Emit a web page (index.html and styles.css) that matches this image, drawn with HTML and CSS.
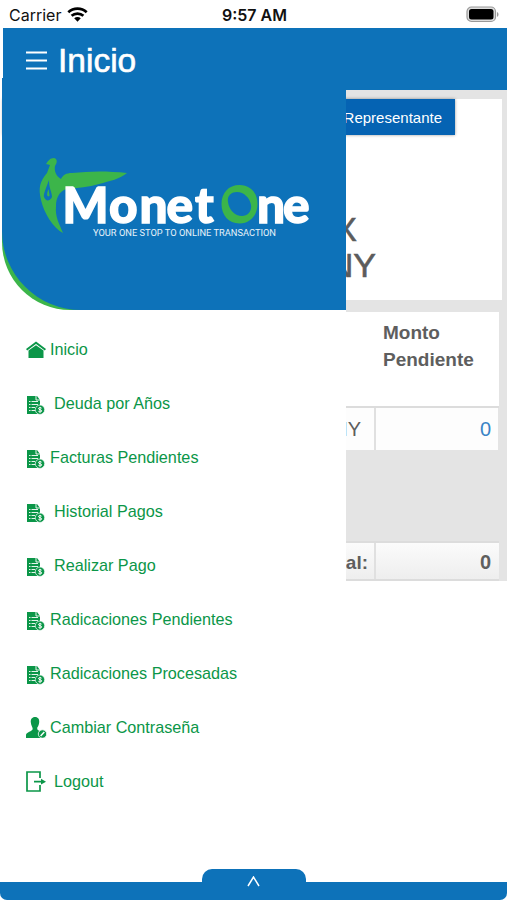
FILE: index.html
```html
<!DOCTYPE html>
<html lang="es">
<head>
  <meta charset="UTF-8">
  <title>Monet One</title>
  <link rel="stylesheet" href="styles.css">
</head>
<body>
  <svg class="sprite">
    <symbol id="icon-bill" viewBox="0 0 19 20">
      <path fill="#0b9648" d="M1 1h10l3 4v7h-1v7H1z"/>
      <path stroke="#fff" stroke-width=".9" fill="none" d="M10 1v4h4M3 6.500h1.500M5.500 6.500H12M3 9.500h1.500M5.500 9.500H12M3 12.500h1.500M5.500 12.500H9M3 15.500h1.500M5.500 15.500H9"/>
      <circle cx="14" cy="14.700" r="4.700" fill="#0b9648" stroke="#fff" stroke-width=".7"/>
      <path stroke="#fff" stroke-width="1" fill="none" d="M15.600 13.200c-1-1-3.100-.7-3.100.3 0 1.500 3.200 1 3.200 2.400 0 1.200-2.300 1.300-3.300.4M14 11.900v5.800"/>
    </symbol>
  </svg>

  <div class="screen">
    <div class="status-bar">
      <div class="carrier">
        <span>Carrier</span>
        <svg width="21" height="15" viewBox="0 0 21 15">
          <g fill="none" stroke="#000" stroke-width="2.700">
            <path d="M1.300 5.300C6.500.5 14.500.5 19.700 5.300"/>
            <path d="M4.600 8.800c3.300-3 8.500-3 11.800 0"/>
          </g>
          <path d="M7.200 11.300c1.900-1.700 4.700-1.700 6.600 0L10.500 14.700z"/>
        </svg>
      </div>
      <div class="clock">9:57 AM</div>
      <svg class="battery" width="34" height="17" viewBox="0 0 34 17">
        <rect x="1" y="1" width="28.500" height="14.500" rx="4.500" fill="#ddd" stroke="#999" stroke-width="1.200"/>
        <rect x="3" y="3" width="24.500" height="10.500" rx="2.500"/>
        <path fill="#999" d="M31 6c2 .8 2 4 0 4.800z"/>
      </svg>
    </div>

    <header class="app-header">
      <svg width="21" height="20" viewBox="0 0 21 20">
        <path stroke="#fff" stroke-width="2" d="M0 1.500h21M0 9.500h21M0 17.500h21"/>
      </svg>
      <h1>Inicio</h1>
    </header>

    <main class="content">
      <section class="card">
        <div class="rep-button">Representante</div>
        <h2 class="company">X<br>NY</h2>
      </section>
      <section class="table">
        <div class="table-head">Monto<br>Pendiente</div>
        <div class="row">
          <div class="cell name">NY</div>
          <div class="cell amount link">0</div>
        </div>
        <div class="row total">
          <div class="cell name">Total:</div>
          <div class="cell amount">0</div>
        </div>
      </section>
    </main>

    <aside class="drawer">
      <div class="drawer-top">
        <div class="drawer-brand">
          <svg width="276" height="86" viewBox="36 155 276 86">
            <!-- bird -->
            <path fill="#3cb54a" d="M46 164c2-3 4-6 8-6 4 1 3 5 1 8-1 5 1 10 6 13 2-4 5-6 11-6 18-2 36-2 55 0-7 6-17 8-28 11-10 3-21 4-33 5-7 3-10 9-10 17-1 11 3 17 7 27-10-5-19-20-22-33-3-12-1-19 6-27l3-8z"/>
            <path fill="#0d72b9" d="M49 180c-2 6-6 14-5 17 2 5 6 4 8 0 0-5-3-8-3-17z"/>
            <path fill="#3cb54a" d="M48.500 189c-1 3-2 5-1 7 1 1 2 0 2-1z"/>
            <g class="logo-word">
              <text x="62.500" y="222.500" textLength="46" lengthAdjust="spacingAndGlyphs">M</text>
              <text x="109 139.500 166.500 195" y="222.500">onet</text>
              <text x="257 283" y="222.500">ne</text>
            </g>
            <path fill="#3cb54a" fill-rule="evenodd" d="M239.500 185c11 0 18 8 18 19s-7 19.500-18 19.500-18-8.500-18-19.500 7-19 18-19zM237 192c-6 0-10 4-9 10 1 8 7 14 14 14 6 0 10-5 9-11-1-7-7-13-14-13z"/>
            <text class="logo-tag" x="93" y="235.500" textLength="183" lengthAdjust="spacingAndGlyphs">YOUR ONE STOP TO ONLINE TRANSACTION</text>
          </svg>
        </div>
      </div>

      <ul class="menu">
        <li>
          <svg width="20" height="17" viewBox="0 0 20 17">
            <path fill="none" stroke="#0b9648" stroke-width="2" d="M.6 8.700L10 1.700l9.400 7"/>
            <path fill="#0b9648" d="M2.500 9.500L10 4.200l7.500 5.300V17h-15z"/>
          </svg>
          <span>Inicio</span>
        </li>
        <li class="spaced"><svg class="bill"><use href="#icon-bill"/></svg><span>Deuda por Años</span></li>
        <li><svg class="bill"><use href="#icon-bill"/></svg><span>Facturas Pendientes</span></li>
        <li class="spaced"><svg class="bill"><use href="#icon-bill"/></svg><span>Historial Pagos</span></li>
        <li class="spaced"><svg class="bill"><use href="#icon-bill"/></svg><span>Realizar Pago</span></li>
        <li><svg class="bill"><use href="#icon-bill"/></svg><span>Radicaciones Pendientes</span></li>
        <li><svg class="bill"><use href="#icon-bill"/></svg><span>Radicaciones Procesadas</span></li>
        <li>
          <svg class="user" width="21" height="21" viewBox="0 0 21 21">
            <path fill="#0b9648" d="M9 0c3.200 0 4.500 2.300 4.200 5.200C13 8 12 9.500 11.300 10.500c-.4 2.500 1 3 4.700 4.500V21H0v-3c0-3 6.500-3.500 6.700-6C6.800 10.500 5 8.500 4.800 5.200 4.500 2.300 6 0 9 0z"/>
            <circle cx="16.500" cy="17" r="4.200" fill="#0b9648" stroke="#fff" stroke-width=".8"/>
            <path stroke="#fff" stroke-width="1.500" d="M14.600 19l3.700-3.900"/>
          </svg>
          <span>Cambiar Contraseña</span>
        </li>
        <li class="spaced">
          <svg width="20" height="21" viewBox="0 0 20 21">
            <path fill="none" stroke="#0b9648" stroke-width="1.700" d="M14 7V1H1v19h13v-6M8 10.700h8"/>
            <path fill="#0b9648" d="M15 7.800l5 2.900-5 2.900z"/>
          </svg>
          <span>Logout</span>
        </li>
      </ul>
    </aside>

    <footer class="bottom-bar">
      <div class="bottom-tab">
        <svg width="13" height="11" viewBox="0 0 13 11">
          <path fill="none" stroke="#fff" stroke-width="1.500" d="M1 10l5.500-9L12 10"/>
        </svg>
      </div>
      <div class="bottom-strip"></div>
    </footer>
  </div>
</body>
</html>
```

FILE: styles.css
```css
* {
  box-sizing: border-box;
}
body {
  margin: 0;
  background: #fff;
  font-family: "Liberation Sans", Arial, sans-serif;
}
h1, h2, ul {
  margin: 0;
  padding: 0;
}
.sprite {
  display: none;
}
.screen {
  position: relative;
  display: flex;
  flex-direction: column;
  width: 507px;
  height: 900px;
  overflow: hidden;
}

/* status bar */
.status-bar {
  display: grid;
  grid-template-columns: 1fr auto 1fr;
  align-items: center;
  height: 28px;
  padding: 1px 7px 0 9px;
  font-family: Inter, "Liberation Sans", sans-serif;
  font-size: 16px;
  color: #111;
}
.carrier {
  display: flex;
  align-items: center;
  gap: 6px;
}
.clock {
  font-weight: 600;
}
.battery {
  justify-self: end;
}

.app-header {
  display: flex;
  align-items: center;
  gap: 11px;
  height: 62px;
  margin-left: 3px;
  padding: 3px 0 0 23px;
  background: #0d72b9;
  color: #fff;
}
.app-header h1 {
  font-size: 33.5px;
  font-weight: 400;
  -webkit-text-stroke: 0.6px #fff;
}

/* page behind the drawer */
.content {
  height: 491px;
  margin-left: 3px;
  padding: 9px 5px 0 0;
  background: #e4e4e4;
}
.card {
  display: flex;
  flex-direction: column;
  height: 201px;
  background: #fff;
}
.rep-button {
  width: 452px;
  height: 36px;
  padding-right: 13px;
  background: #0563b3;
  box-shadow: 0 0 3px rgba(0, 0, 0, 0.4);
  color: #fff;
  font-size: 15px;
  line-height: 38px;
  text-align: right;
}
.company {
  width: 373px;
  padding-top: 76px;
  font-size: 34px;
  font-weight: 400;
  line-height: 36px;
  color: #5c5c5c;
  -webkit-text-stroke: 0.6px #5c5c5c;
  text-align: right;
}
.company::first-line {
  letter-spacing: 19px;
}
.table {
  margin: 12px 3px 0 0;
  color: #5e5e5e;
}
.table-head {
  height: 94px;
  padding: 7px 0 0 380px;
  background: #fff;
  font-size: 19px;
  font-weight: bold;
  line-height: 27px;
}
.row {
  display: flex;
  height: 44px;
  border-top: 2px solid #dcdcdc;
}
.cell {
  flex: none;
  background: #fdfdfd;
  font-size: 20px;
  line-height: 42px;
  text-align: right;
}
.cell.name {
  width: 373px;
  padding-right: 13px;
  border-right: 2px solid #e0e0e0;
}
.cell.amount {
  width: 122px;
  padding-right: 7px;
}
.cell.link {
  color: #3a84c6;
}
.row.total {
  height: 40px;
  margin-top: 91px;
  border-bottom: 2px solid #dcdcdc;
}
.total .cell {
  background: linear-gradient(#fbfbfb, #eee);
  font-weight: bold;
  line-height: 39px;
}
.total .cell.name {
  padding-right: 6px;
  font-size: 19px;
}
.total .cell.amount {
  width: 123px;
  padding-right: 8px;
}

/* side menu, slides over the page */
.drawer {
  position: absolute;
  top: 78px;
  left: 2px;
  width: 344px;
  height: 804px;
  background: #fff;
}
.drawer-top {
  height: 232px;
  background: #3cb54a;
  border-bottom-left-radius: 68px;
}
.drawer-brand {
  height: 232px;
  padding: 77px 0 0 34px;
  background: #0d72b9;
  border-bottom-left-radius: 79px;
}
.logo-word {
  fill: #fff;
  stroke: #fff;
  stroke-width: 1.4px;
  font-family: Lato, sans-serif;
  font-size: 49.5px;
  font-weight: 900;
}
.logo-tag {
  fill: #e8f2fa;
  font-family: Roboto, sans-serif;
  font-size: 9.5px;
}
.menu {
  padding: 12px 0 0 24px;
  list-style: none;
}
.menu li {
  display: flex;
  align-items: center;
  gap: 4px;
  height: 54px;
  color: #0b9648;
  font-size: 16.2px;
}
.menu li span {
  padding-top: 1px;
}
.menu li svg {
  flex: none;
}
.menu .bill {
  width: 19px;
  height: 20px;
  margin: 3px 1px 0 0;
}
.menu .user {
  margin-right: -1px;
}
.menu .spaced {
  gap: 8px;
}

.bottom-bar {
  display: flex;
  flex-direction: column;
  align-items: center;
  position: relative;
  margin-top: auto;
}
.bottom-tab {
  width: 104px;
  height: 13px;
  padding-top: 7px;
  background: #0d72b9;
  border-radius: 10px 10px 0 0;
  text-align: center;
  line-height: 0;
}
.bottom-tab svg {
  position: relative;
  z-index: 1;
}
.bottom-strip {
  width: 100%;
  height: 18px;
  background: #0d72b9;
  border-radius: 0 0 7px 7px;
}
```
